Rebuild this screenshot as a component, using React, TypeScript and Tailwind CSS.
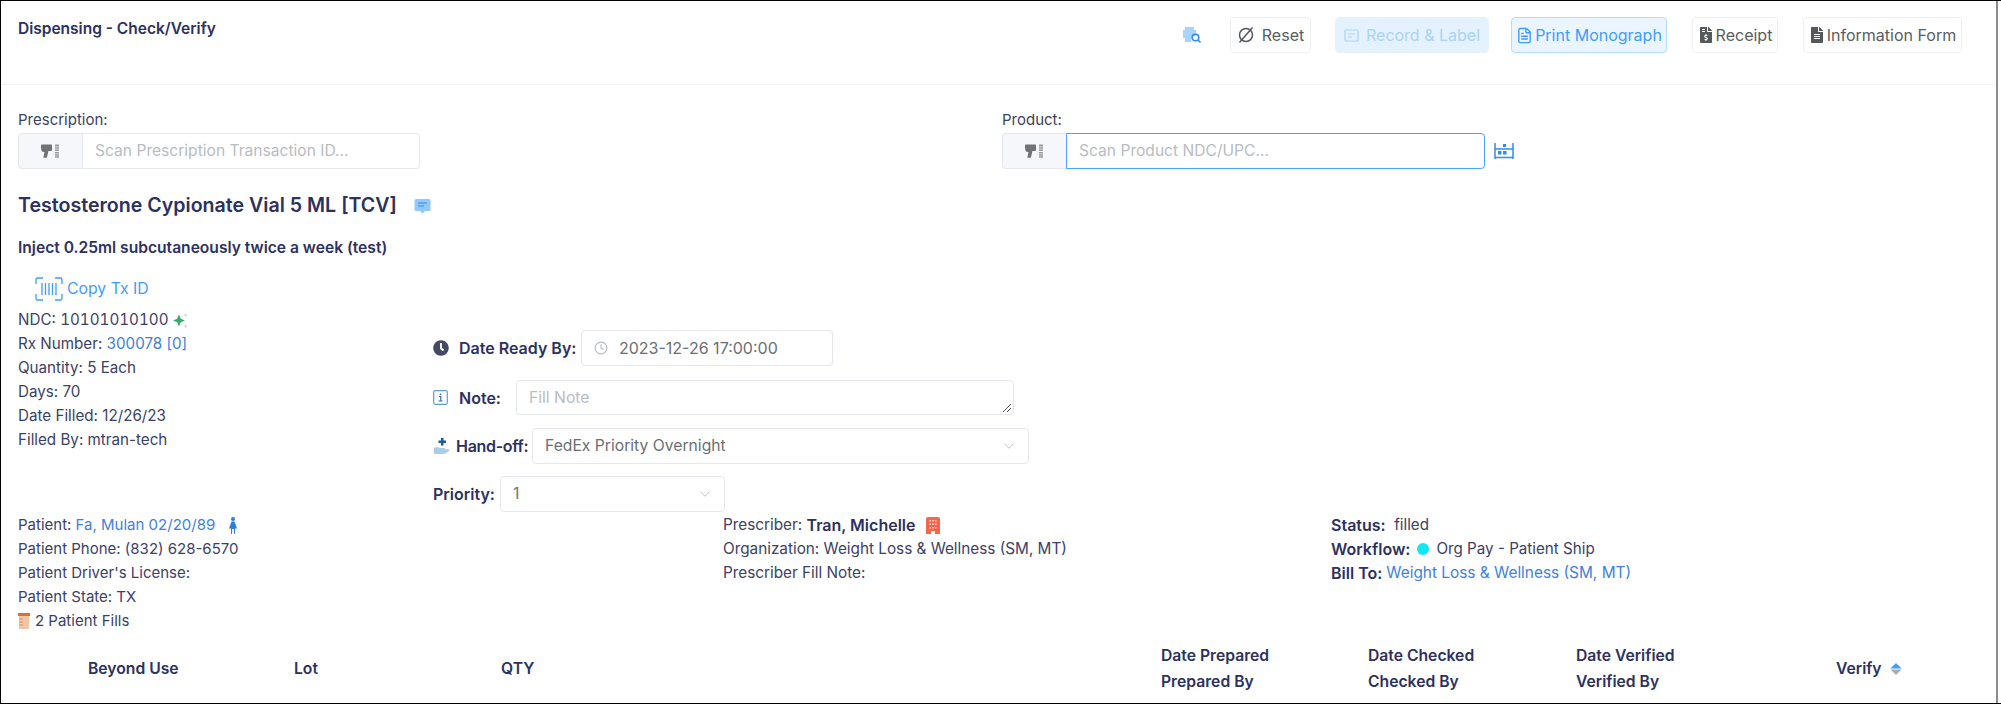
import React from 'react';
import { ChevronDown, Clock, FileText } from 'lucide-react';
import { FaClock, FaFileAlt, FaFileInvoiceDollar } from 'react-icons/fa';

const inter = { fontFamily: 'Inter, sans-serif' };

function ScannerIcon() {
  return (
    <svg width="19" height="14" viewBox="0 0 19 14" fill="#6f7277">
      <path d="M1 .5h9a1 1 0 0 1 1 1v4.500a1 1 0 0 1-1 1H7.500L6 13a1 1 0 0 1-1 .8H3a.6.600 0 0 1-.6-.8L3.500 8H2.500C1 8 .2 6.500.1 5V1.500A1 1 0 0 1 1 .5z" />
      <path d="M14 .5h4v2h-4zM14 3.300h4v1.500h-4zM14 5.600h4v1.500h-4zM14 7.900h4v1.500h-4zM14 10.200h4v1.500h-4zM14 12.300h4v1.500h-4z" opacity=".7" />
    </svg>
  );
}

function ScanInput({ placeholder, focused, widthClass }: { placeholder: string; focused?: boolean; widthClass: string }) {
  return (
    <div className={`flex h-9 ${widthClass}`}>
      <div
        className={
          focused
            ? 'flex w-[64px] shrink-0 items-center justify-center rounded-l-[4px] border border-r-0 border-[#e4e7ec] bg-[#f5f7fa]'
            : 'flex w-[65px] shrink-0 items-center justify-center rounded-l-[4px] border border-[#e4e7ec] bg-[#f5f7fa]'
        }
      >
        <ScannerIcon />
      </div>
      <div
        className={
          focused
            ? 'flex flex-1 items-center rounded-r-[4px] border border-[#4aa3ff] px-[12px] text-[15.600px] text-[#b9bcc2]'
            : 'flex flex-1 items-center rounded-r-[4px] border border-l-0 border-[#e4e7ec] px-[12px] text-[15.600px] text-[#b9bcc2]'
        }
      >
        {placeholder}
      </div>
    </div>
  );
}

function HeaderButton({ children, className }: { children: React.ReactNode; className: string }) {
  return (
    <div className={`flex h-9 items-center justify-center rounded-[4px] border text-[16px] ${className}`}>{children}</div>
  );
}

function ResetIcon() {
  return (
    <svg width="18" height="18" viewBox="0 0 18 18" fill="none" stroke="#55585d" strokeWidth="1.500">
      <circle cx="9" cy="9" r="6.500" />
      <path d="M15.500 1.500 2.500 16.500" />
    </svg>
  );
}

function Row({ children, className = '' }: { children: React.ReactNode; className?: string }) {
  return <div className={`flex h-6 items-center whitespace-pre ${className}`}>{children}</div>;
}

export default function App() {
  return (
    <div style={inter} className="box-border flex h-[704px] w-[2001px] flex-col overflow-hidden border-t border-b border-l border-black bg-white text-[15.200px] text-[#3c3f66]">
      <div className="mr-[3px] flex h-full flex-col border-r-2 border-[#8b8b8b]">
        {/* header */}
        <div className="flex h-[84px] shrink-0 items-start justify-between border-b border-[#f2f3f5] pl-[17px] pr-[34px]">
          <h1 className="mt-[16px] text-[15.500px] font-semibold text-[#2c3160]">Dispensing - Check/Verify</h1>
          <div className="mt-4 flex items-center">
            <svg className="mr-[28px]" width="20" height="18" viewBox="0 0 20 18" fill="none">
              <path d="M3 1h9v3h2v6h-2.500a5 5 0 0 0-2 6H3v-4H1V4h2z" fill="#a9d3fb" />
              <circle cx="13.500" cy="11.500" r="3.300" stroke="#2f8cf0" strokeWidth="1.600" />
              <path d="m16 14 2.500 2.500" stroke="#2f8cf0" strokeWidth="1.600" />
            </svg>
            <HeaderButton className="w-[81px] gap-[7px] border-[#eeeff1] text-[#5a5d62]">
              <ResetIcon />
              Reset
            </HeaderButton>
            <HeaderButton className="ml-[24px] w-[154px] gap-[7px] border-[#e4f1fe] bg-[#e4f1fe] text-[#a9d3fb]">
              <svg width="15" height="15" viewBox="0 0 15 15" fill="none" stroke="#a9d3fb" strokeWidth="1.200">
                <rect x="1" y="2" width="13" height="11" rx="1" />
                <path d="M4 6h7M4 9h4" />
              </svg>
              Record &amp; Label
            </HeaderButton>
            <HeaderButton className="ml-[22px] w-[156px] gap-[2px] border-[#b5dbff] bg-[#ebf5ff] text-[#3f9dfb]">
              <FileText size={17} color="#3f9dfb" />
              Print Monograph
            </HeaderButton>
            <HeaderButton className="ml-[25px] w-[86px] gap-[2px] border-[#eeeff1] text-[#5a5d62]">
              <FaFileInvoiceDollar size={16} color="#55585d" />
              Receipt
            </HeaderButton>
            <HeaderButton className="ml-[25px] w-[159px] gap-[2px] border-[#eeeff1] text-[#5a5d62]">
              <FaFileAlt size={16} color="#55585d" />
              Information Form
            </HeaderButton>
          </div>
        </div>

        {/* scan inputs */}
        <div className="mt-[25px] grid grid-cols-[984px_1fr] pl-[17px] text-[15px]">
          <div>
            <div className="mb-[3px] h-5 leading-5">Prescription:</div>
            <ScanInput placeholder="Scan Prescription Transaction ID..." widthClass="w-[402px]" />
          </div>
          <div>
            <div className="mb-[3px] h-5 leading-5">Product:</div>
            <div className="flex items-center">
              <ScanInput placeholder="Scan Product NDC/UPC..." focused widthClass="w-[483px]" />
              <svg className="ml-[9px]" width="20" height="18" viewBox="0 0 20 18" fill="none" stroke="#2f8cf0" strokeWidth="1.500">
                <path d="M1 1v16M19 1v16M1 15.500h18M1 7h18" />
                <rect x="4" y="9" width="3.500" height="3.500" fill="#2f8cf0" stroke="none" />
                <rect x="9" y="9" width="3.500" height="3.500" fill="#2f8cf0" stroke="none" />
                <rect x="9" y="2" width="3" height="3" fill="#2f8cf0" stroke="none" />
              </svg>
            </div>
          </div>
        </div>

        {/* drug */}
        <div className="mt-[23px] flex h-7 items-center pl-[17px]">
          <h2 className="text-[19.600px] font-semibold text-[#2c3160]">Testosterone Cypionate Vial 5 ML [TCV]</h2>
          <svg className="ml-[17px]" width="17" height="16" viewBox="0 0 17 16">
            <path d="M2 1h13a1.500 1.500 0 0 1 1.500 1.500v9A1.500 1.500 0 0 1 15 13h-4l-2.500 2.500L6 13H2A1.500 1.500 0 0 1 .5 11.500v-9A1.500 1.500 0 0 1 2 1z" fill="#91c8fd" />
            <path d="M4 5h9M4 8h6" stroke="#2f8cf0" strokeWidth="1" />
          </svg>
        </div>
        <div className="mt-[16px] h-6 pl-[17px] text-[15.600px] font-semibold leading-6 text-[#2c3160]">Inject 0.25ml subcutaneously twice a week (test)</div>

        {/* details + form */}
        <div className="mt-[14px] flex h-[239px] pl-[17px]">
          <div className="w-[415px] shrink-0">
            <div className="mb-[4px] flex h-[30px] items-center pl-[17px] text-[15.800px] text-[#3f9dfb]">
              <svg width="28" height="24" viewBox="0 0 28 24" fill="none" stroke="#3f9dfb" strokeWidth="1.300">
                <path d="M8 1H2.500A1.500 1.500 0 0 0 1 2.500V7M20 1h5.500A1.500 1.500 0 0 1 27 2.500V7M8 23H2.500A1.500 1.500 0 0 1 1 21.500V17M20 23h5.500a1.500 1.500 0 0 0 1.500-1.500V17" />
                <path d="M7 6v12M10.500 6v12M14 6v12M17.500 6v12M21 6v12" />
              </svg>
              <span className="ml-[4px]">Copy Tx ID</span>
            </div>
            <Row>
              NDC: <span className="tabular-nums">10101010100</span>
              <svg className="ml-[4px]" width="15" height="15" viewBox="0 0 15 15" fill="#36ad6d">
                <path d="M6 1.500 7.800 5.700 12 7.500 7.800 9.300 6 13.500 4.200 9.300 0 7.500 4.200 5.700z" />
                <path d="M12.500 0l.6 1.400 1.400.6-1.400.6-.6 1.400-.6-1.400L10.500 2l1.400-.6zM12.500 11l.6 1.400 1.400.6-1.400.6-.6 1.400-.6-1.400-1.400-.6 1.400-.6z" opacity=".4" />
              </svg>
            </Row>
            <Row>
              Rx Number: <span className="text-[#3f7fe0]">300078 [0]</span>
            </Row>
            <Row>Quantity: 5 Each</Row>
            <Row>Days: 70</Row>
            <Row>Date Filled: 12/26/23</Row>
            <Row>Filled By: mtran-tech</Row>
          </div>
          <div className="mt-[56px] flex flex-col text-[16px] font-semibold text-[#2c3160]">
            <div className="flex h-[36px] items-center">
              <FaClock size={16} color="#444a63" />
              <span className="ml-[10px] w-[122px]">Date Ready By:</span>
              <div className="flex h-full w-[252px] items-center rounded-[4px] border border-[#e4e7ec] pl-[12px] font-normal text-[#6b6e74]">
                <Clock size={14} color="#b9bcc2" />
                <span className="ml-[11px]">2023-12-26 17:00:00</span>
              </div>
            </div>
            <div className="mt-[14px] flex h-[35px] items-center">
              <svg width="15" height="15" viewBox="0 0 15 15" fill="none">
                <rect x=".7" y=".7" width="13.600" height="13.600" rx="1.500" stroke="#5c9fd8" strokeWidth="1.200" />
                <path d="M7.500 3.500v1.500M6 6.500h1.800v4.500M5.500 11h4" stroke="#2f6fb0" strokeWidth="1.200" />
              </svg>
              <span className="ml-[11px] w-[57px]">Note:</span>
              <div className="relative flex h-full w-[498px] items-center rounded-[4px] border border-[#e4e7ec] pl-[12px] text-[15.700px] font-normal text-[#b9bcc2]">
                Fill Note
                <svg className="absolute bottom-[1px] right-[1px]" width="10" height="10" viewBox="0 0 10 10" stroke="#555" strokeWidth="1">
                  <path d="M9 1 1 9M9 5 5 9" />
                </svg>
              </div>
            </div>
            <div className="mt-[13px] flex h-[36px] items-center">
              <svg width="18" height="18" viewBox="0 0 18 18">
                <path d="M8 1h2.500v2.500H13V6h-2.500v2.500H8V6H5.500V3.500H8z" fill="#1e5b94" />
                <path d="M1 11c2-1.500 4-1.500 6 0h4c1.500 0 1.500 2 0 2H8l6-1c2-.3 3 1 2 2-2 2-4 3-7 3H1z" fill="#a8cde8" />
              </svg>
              <span className="ml-[5px] w-[76px] tracking-[-0.3px]">Hand-off:</span>
              <div className="flex h-full w-[497px] items-center justify-between rounded-[4px] border border-[#e4e7ec] pl-[12px] pr-[10px] text-[15.700px] font-normal text-[#6b6e74]">
                FedEx Priority Overnight
                <ChevronDown size={18} strokeWidth={1.200} color="#b9bcc2" />
              </div>
            </div>
            <div className="mt-[12px] flex h-[36px] items-center">
              <span className="w-[67px]">Priority:</span>
              <div className="flex h-full w-[225px] items-center justify-between rounded-[4px] border border-[#e4e7ec] pl-[12px] pr-[10px] text-[15.700px] font-normal text-[#6b6e74]">
                1
                <ChevronDown size={18} strokeWidth={1.200} color="#b9bcc2" />
              </div>
            </div>
          </div>
        </div>

        {/* patient / prescriber / status */}
        <div className="grid h-[120px] grid-cols-[705px_608px_1fr] pl-[17px]">
          <div className="text-[15px]">
            <Row>
              Patient: <span className="text-[#3f7fe0]">Fa, Mulan 02/20/89</span>
              <svg className="ml-[14px]" width="8" height="17" viewBox="0 0 8 17" fill="#2f7fd8">
                <circle cx="4" cy="2" r="2" />
                <path d="M2.500 4.500h3L8 11.500H6V17H5v-5H3v5H2v-5.500H0z" />
              </svg>
            </Row>
            <Row>Patient Phone: (832) 628-6570</Row>
            <Row>Patient Driver's License:</Row>
            <Row>Patient State: TX</Row>
            <Row>
              <svg className="mr-[5px]" width="12" height="16" viewBox="0 0 12 16">
                <rect x="0" y="0" width="12" height="3" fill="#d9702c" />
                <rect x="1" y="3" width="10" height="13" fill="#f5c6a5" />
                <path d="M1 6h4M1 9h4M1 12h4" stroke="#d9702c" strokeWidth=".6" />
              </svg>
              2 Patient Fills
            </Row>
          </div>
          <div className="text-[15.300px]">
            <Row>
              Prescriber: <span className="text-[16px] font-semibold text-[#2c3160]">Tran, Michelle</span>
              <svg className="ml-[11px]" width="14" height="17" viewBox="0 0 14 17" fill="#f4654a">
                <path d="M2 0h10a2 2 0 0 1 2 2v15H9v-3H5v3H0V2a2 2 0 0 1 2-2z" />
                <path d="M3.500 3h1.500v1.500H3.500zM6.300 3h1.500v1.500H6.300zM9 3h1.500v1.500H9zM3.500 6.500h1.500V8H3.500zM6.300 6.500h1.500V8H6.300zM9 6.500h1.500V8H9zM3.500 10h1.500v1.500H3.500zM6.300 10h1.500v1.500H6.300zM9 10h1.500v1.500H9z" fill="#fde3dd" />
              </svg>
            </Row>
            <Row>Organization: Weight Loss &amp; Wellness (SM, MT)</Row>
            <Row>Prescriber Fill Note:</Row>
          </div>
          <div>
            <Row>
              <span className="text-[16px] font-semibold text-[#2c3160]">Status:</span>  filled
            </Row>
            <Row>
              <span className="text-[16px] font-semibold text-[#2c3160]">Workflow:</span>
              <span className="mx-[7px] inline-block h-[12px] w-[12px] rounded-full bg-[#12e6f2]" />
              Org Pay - Patient Ship
            </Row>
            <Row>
              <span className="text-[16px] font-semibold text-[#2c3160]">Bill To:</span>
              <span className="ml-[4px] text-[15.400px] text-[#3f7fe0]">Weight Loss &amp; Wellness (SM, MT)</span>
            </Row>
          </div>
        </div>

        {/* table head */}
        <div className="mt-[9px] grid grid-cols-[206px_207px_660px_207px_208px_260px_1fr] pl-[87px] text-[15.700px] font-semibold text-[#2c3160]">
          <div className="flex h-[54px] items-center">Beyond Use</div>
          <div className="flex h-[54px] items-center">Lot</div>
          <div className="flex h-[54px] items-center">QTY</div>
          <div className="flex h-[54px] flex-col justify-between py-[2px]">
            <span>Date Prepared</span>
            <span>Prepared By</span>
          </div>
          <div className="flex h-[54px] flex-col justify-between py-[2px]">
            <span>Date Checked</span>
            <span>Checked By</span>
          </div>
          <div className="flex h-[54px] flex-col justify-between py-[2px]">
            <span>Date Verified</span>
            <span>Verified By</span>
          </div>
          <div className="flex h-[54px] items-center">
            Verify
            <svg className="ml-[8px]" width="12" height="14" viewBox="0 0 12 14">
              <path d="M6 1 11.500 6.500H.5z" fill="#3f9dfb" />
              <path d="M6 13 .5 7.500h11z" fill="#a9acb3" />
            </svg>
          </div>
        </div>
      </div>
    </div>
  );
}
